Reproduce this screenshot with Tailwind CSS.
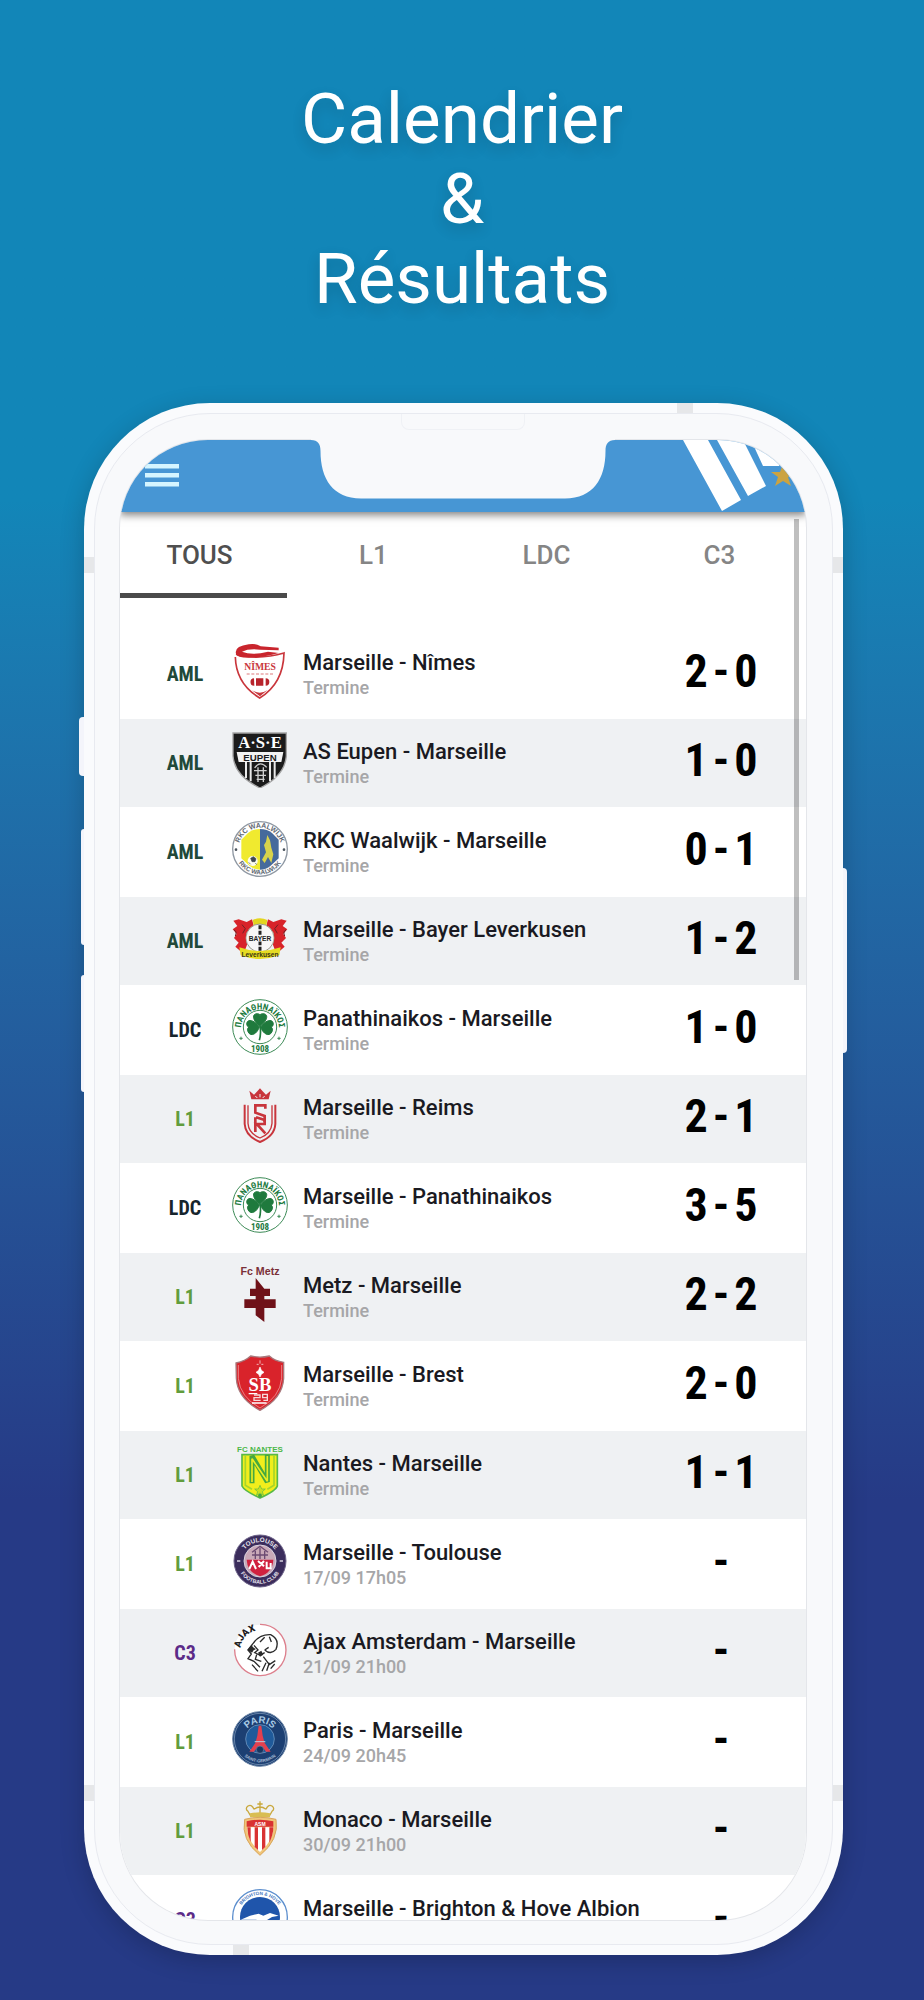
<!DOCTYPE html>
<html lang="fr">
<head>
  <meta charset="UTF-8">
  <meta name="viewport" content="width=device-width, initial-scale=1.0">
  <title>Calendrier &amp; Résultats</title>

  <script src="https://cdn.jsdelivr.net/npm/@tailwindcss/browser@4"></script>
</head>
<body class="h-screen flex flex-col overflow-hidden font-['Roboto',sans-serif] bg-linear-to-b from-[#1286b8] from-25% to-[#263a86] to-75%">

  <h1 class="pt-[79px] pb-[84px] text-center text-[71px] leading-[80px] font-normal text-white [text-shadow:0_6px_14px_rgba(0,0,0,0.16)]">
    Calendrier<br>&amp;<br>Résultats
  </h1>

  <!-- phone -->
  <main class="relative flex-1 min-h-0 ml-[84px] mr-[81px] mb-[45px] rounded-[126px] bg-[#fafbfd] p-[10px] shadow-[0_6px_24px_rgba(0,0,0,0.2)]">

    <!-- side buttons -->
    <div class="absolute -left-[5px] top-[314px] w-[5px] h-[59px] rounded-l-sm bg-[#f4f5fb]"></div>
    <div class="absolute -left-[3px] top-[426px] w-[3px] h-[116px] rounded-l-sm bg-[#f4f5fb]"></div>
    <div class="absolute -left-[3px] top-[572px] w-[3px] h-[117px] rounded-l-sm bg-[#f4f5fb]"></div>
    <div class="absolute -right-[4px] top-[465px] w-[4px] h-[185px] rounded-r-sm bg-[#f4f5fb]"></div>

    <!-- antenna bands -->
    <div class="absolute left-0 top-[154px] w-[10px] h-4 bg-[#e6e7e9]"></div>
    <div class="absolute right-0 top-[154px] w-[10px] h-4 bg-[#e6e7e9]"></div>
    <div class="absolute left-0 bottom-[154px] w-[10px] h-4 bg-[#e6e7e9]"></div>
    <div class="absolute right-0 bottom-[154px] w-[10px] h-4 bg-[#e6e7e9]"></div>
    <div class="absolute right-[150px] top-0 w-4 h-[10px] bg-[#e6e7e9]"></div>
    <div class="absolute left-[149px] bottom-0 w-4 h-[10px] bg-[#e6e7e9]"></div>

    <div class="relative h-full rounded-[116px] border border-[#e8eaf0] bg-[#f8f9fb] pl-[25px] pr-[26px] pt-[26px] pb-[24px]">

      <!-- speaker -->
      <div class="absolute top-0 left-0 right-[2px] mx-auto w-[124px] h-4 rounded-b-lg border border-t-0 border-[#eff1f5]"></div>

      <!-- notch -->
      <svg class="absolute z-10 top-[25px] left-0 right-[2px] mx-auto" width="304" height="60" viewBox="0 0 304 60">
        <path d="M0 0V1C7 1 9.500 5 9.500 12C9.500 40 22 59.500 50 59.500H254C282 59.500 294.500 40 294.500 12C294.500 5 297 1 304 1V0Z" fill="#f8f9fb"/>
      </svg>

      <div class="relative h-full rounded-[88px] overflow-hidden bg-white flex flex-col shadow-[0_0_0_1px_#e4e6ea]">

        <header class="relative z-[1] h-[72px] shrink-0 bg-[#4796d4] shadow-[0_3px_8px_rgba(0,0,0,0.5)] flex justify-between">
          <button type="button" aria-label="Menu" class="ml-6 mt-[23px] w-[36px] h-[26px]">
            <svg width="36" height="26" viewBox="0 0 36 26" fill="#d5f5ff">
              <path d="M1 1h34v4.500H1zM1 10h34v4.500H1zM1 19h34v4.500H1z"/>
            </svg>
          </button>
          <svg width="126" height="72" viewBox="680 440 126 72">
            <path d="M683 440H708L741 500L722 511Z M717 440H743L766 486L748 496Z M751 440H790L779 466H763Z" fill="#fff"/>
            <path d="M783 464L786 472H795L788 477L791 486L783 481L775 486L778 477L771 472H780Z" fill="#cba341"/>
          </svg>
        </header>

        <nav class="h-[86px] shrink-0 grid grid-cols-[167px_1fr_1fr_1fr] text-[26px] text-[#858585]">
          <button type="button" class="pt-[5px] pr-2 border-b-[5px] border-[#4a4a4a] font-medium text-[#4f4f4f]">TOUS</button>
          <button type="button" class="font-medium">L1</button>
          <button type="button" class="font-medium">LDC</button>
          <button type="button" class="font-medium">C3</button>
        </nav>

        <table class="mt-[31px] w-full table-fixed border-collapse">
          <colgroup>
            <col class="w-[112px]">
            <col class="w-[56px]">
            <col>
            <col class="w-[170px]">
          </colgroup>
          <tbody id="matches"></tbody>
        </table>

        <!-- scrollbar -->
        <div class="absolute right-[7px] top-[79px] w-[5px] h-[461px] bg-black/25"></div>
      </div>
    </div>
  </main>

  <script>
    // crests, all on a 168 x 168 canvas
    const crests = {
      nimes: `
        <path d="M10 42Q12 122 83 165Q154 122 156 30Q110 44 60 42Q30 40 12 34" fill="#fff" stroke="#c9363c" stroke-width="5"/>
        <path d="M12 32Q6 10 50 4Q70 0 86 10L140 14V22L84 20Q50 16 30 26Q60 38 108 26L140 30Q90 44 50 44Q14 44 12 32Z" fill="#c9252d"/>
        <text x="84" y="82" font-size="29" font-weight="700" fill="#c9363c" text-anchor="middle" font-family="Liberation Serif">NÎMES</text>
        <path d="M44 93H124" stroke="#e9a6a8" stroke-width="4" stroke-dasharray="9 5"/>
        <path d="M66 106a11 11 0 1 0 1 22ZM72 106h22v22h-22ZM101 106a11 11 0 1 1 0 22Z" fill="#b8242c"/>
        <path d="M60 142Q84 156 106 142L84 160Z" fill="#c9363c"/>`,
      eupen: `
        <path d="M3 3H163V72Q158 132 84 168Q8 132 3 72Z" fill="#1b1b1b" stroke="#a5a5a5" stroke-width="4"/>
        <text x="84" y="48" font-size="50" font-weight="700" fill="#fff" text-anchor="middle" font-family="Liberation Serif">A·S·E</text>
        <path d="M14 60H154L148 90H20Z" fill="#f2f2f2"/>
        <text x="84" y="86" font-size="29" font-weight="700" fill="#1b1b1b" text-anchor="middle" font-family="Liberation Sans">EUPEN</text>
        <path d="M42 90V138M56 90V148M114 90V148M128 90V138" stroke="#e9e9e9" stroke-width="6"/>
        <path d="M68 108Q84 84 104 106M66 116H104M70 130H102M74 142H98M78 106V150M94 106V150" stroke="#cfcfcf" stroke-width="4" fill="none"/>`,
      rkc: `
        <circle cx="84" cy="84" r="82" fill="#fff" stroke="#8f98a3" stroke-width="4"/>
        <path id="rkcTop" d="M20 84a64 64 0 0 1 128 0" fill="none"/>
        <path id="rkcBot" d="M8 84a76 76 0 0 0 152 0" fill="none"/>
        <text font-size="21" font-weight="700" fill="#5d6670" font-family="Liberation Sans"><textPath href="#rkcTop" startOffset="50%" text-anchor="middle">RKC WAALWIJK</textPath></text>
        <text font-size="19" font-weight="700" fill="#5d6670" font-family="Liberation Sans"><textPath href="#rkcBot" startOffset="50%" text-anchor="middle">RKC WAALWIJK</textPath></text>
        <path d="M84 24Q62 24 48 36L28 56V112L52 134Q66 146 84 146Z" fill="#f0ea2f"/>
        <path d="M84 24Q106 24 120 36L140 56V112L116 134Q102 146 84 146Z" fill="#456a9c"/>
        <path d="M106 42L114 58L118 80L124 100L118 126L108 108L98 126L90 116L102 94L96 72L102 62Z" fill="#d9d34b"/>
        <circle cx="62" cy="120" r="15" fill="#fbfbf0"/>
        <path d="M56 112l8-5 8 6-3 9h-9ZM50 124l6 6M70 126l4 5" fill="#3f4750" stroke="#3f4750" stroke-width="2"/>
        <circle cx="12" cy="86" r="4" fill="#4c555f"/><circle cx="156" cy="86" r="4" fill="#4c555f"/>`,
      leverkusen: `
        <path d="M4 32L20 28L44 36L60 28L66 50L40 118L24 122L10 110L20 98L6 84L14 72L2 58L16 48Z" fill="#d8232a"/>
        <path d="M164 32L148 28L124 36L108 28L102 50L128 118L144 122L158 110L148 98L162 84L154 72L166 58L152 48Z" fill="#d8232a"/>
        <path d="M6 60Q16 64 10 78M162 60Q152 64 158 78M30 44L40 56L32 70M138 44L128 56L136 70" stroke="#6e2226" stroke-width="3" fill="none"/>
        <path d="M62 30Q84 20 106 30L102 50H66Z" fill="#e3d51f"/>
        <circle cx="84" cy="84" r="42" fill="#f7f7f7" stroke="#9a9a8c" stroke-width="3"/>
        <path d="M84 46V122" stroke="#222" stroke-width="9" stroke-dasharray="12 4"/>
        <rect x="44" y="76" width="80" height="18" fill="#f7f7f7"/>
        <text x="84" y="92" font-size="20" font-weight="700" fill="#222" text-anchor="middle" font-family="Liberation Sans">BAYER</text>
        <path d="M22 112Q84 134 146 112L142 136Q84 158 26 136Z" fill="#e6dc22"/>
        <text x="84" y="141" font-size="20" font-weight="700" fill="#3a3512" text-anchor="middle" font-family="Liberation Sans">Leverkusen</text>`,
      pana: `
        <circle cx="84" cy="84" r="82" fill="#fff" stroke="#3d8b57" stroke-width="3"/>
        <circle cx="84" cy="84" r="50" fill="none" stroke="#3d8b57" stroke-width="3"/>
        <path id="panaRing" d="M27 88a57 57 0 1 1 114 0" fill="none"/>
        <text font-size="26" font-weight="700" fill="#217a40" font-family="Roboto Condensed"><textPath href="#panaRing" startOffset="50%" text-anchor="middle">ΠΑΝΑΘΗΝΑΪΚΟΣ</textPath></text>
        <path d="M84 82C62 66 58 44 76 44Q84 44 84 50Q84 44 92 44C112 44 106 66 84 82ZM82 84C64 60 46 60 44 74Q44 82 50 84Q44 90 48 98C56 116 76 104 82 84ZM86 84C104 60 122 60 124 74Q124 82 118 84Q124 90 120 98C112 116 92 104 86 84Z" fill="#1f7a3d" stroke="#1f7a3d" stroke-width="3"/>
        <path d="M84 80Q88 104 82 124" stroke="#1f7a3d" stroke-width="5" fill="none"/>
        <path d="M22 118h10M27 113v10M136 118h10M141 113v10" stroke="#3d8b57" stroke-width="3"/>
        <text x="84" y="159" font-size="27" font-weight="700" fill="#217a40" text-anchor="middle" font-family="Roboto Condensed">1908</text>`,
      reims: `
        <path d="M52 8L66 20L76 10L84 1L92 10L102 20L116 8L110 34H58Z" fill="#c8353c"/>
        <path d="M70 24l6 6M84 18v10M98 24l-6 6" stroke="#f0f1f3" stroke-width="3"/>
        <path d="M38 50V108Q40 144 84 162Q128 144 130 108V50" fill="none" stroke="#c8353c" stroke-width="6"/>
        <path d="M48 52V106Q50 136 84 150Q118 136 120 106V52" fill="none" stroke="#c8353c" stroke-width="4"/>
        <path d="M100 62V52H70V74L98 84V102" fill="none" stroke="#c8353c" stroke-width="8"/>
        <path d="M70 132V88M72 88L98 96V108L74 108L100 136" fill="none" stroke="#c8353c" stroke-width="8"/>`,
      metz: `
        <text x="84" y="26" font-size="32" font-weight="700" fill="#7a3038" text-anchor="middle" font-family="Liberation Sans">Fc Metz</text>
        <path d="M71 36L97 68H114V90H97V100H131V126H97V168L71 148V126H37V100H71V90H54V68H71Z" fill="#6f1219"/>`,
      brest: `
        <path d="M12 24Q40 18 56 3Q84 10 112 3Q128 18 155 22V70Q152 130 84 166Q16 130 13 70Z" fill="#d9232b" stroke="#a8787c" stroke-width="4"/>
        <path d="M19 30V70Q24 126 84 159Q144 126 149 70V30" fill="none" stroke="#f0b0b2" stroke-width="2"/>
        <path d="M84 36l4 10 8 6-8 6-4 8-4-8-8-6 8-6ZM84 16v10M74 28h6M88 28h6" fill="#fff" stroke="#fff" stroke-width="2"/>
        <text x="84" y="108" font-size="56" font-weight="700" fill="#fff" text-anchor="middle" font-family="Liberation Serif">SB</text>
        <path d="M50 116H76M60 144H104" stroke="#fff" stroke-width="4"/>
        <path d="M66 120h18v8h-18v8h20M106 128h-14v-10h14v18h-12" fill="none" stroke="#f6dada" stroke-width="4"/>`,
      nantes: `
        <text x="84" y="23" font-size="24" font-weight="700" fill="#4cb748" text-anchor="middle" font-family="Liberation Sans">FC NANTES</text>
        <path d="M30 32H136V126Q132 140 84 162Q36 140 30 126Z" fill="#f1ee1c" stroke="#58b947" stroke-width="5"/>
        <path d="M40 36V124L60 136M126 36V124L106 136" fill="none" stroke="#a6d52c" stroke-width="5"/>
        <path d="M60 118V36L106 114V32" fill="none" stroke="#45a83f" stroke-width="15" stroke-linejoin="bevel"/>
        <path d="M60 114V44L106 112V36" fill="none" stroke="#e9ee22" stroke-width="5" stroke-linejoin="bevel"/>
        <path d="M84 124l5 11h11l-9 8 4 12-11-8-11 8 4-12-9-8h11Z" fill="#c9e11f" stroke="#58b947" stroke-width="2"/>
        <circle cx="84" cy="155" r="6" fill="#45a83f"/>`,
      toulouse: `
        <circle cx="84" cy="84" r="78" fill="#3b2d5c" stroke="#6d6389" stroke-width="3"/>
        <circle cx="84" cy="84" r="48" fill="#c9a9b8" stroke="#d8d2df" stroke-width="3"/>
        <path id="tfcTop" d="M27 84a57 57 0 0 1 114 0" fill="none"/>
        <path id="tfcBot" d="M16 84a68 68 0 0 0 136 0" fill="none"/>
        <text font-size="19" font-weight="700" fill="#e8e5ef" font-family="Liberation Sans"><textPath href="#tfcTop" startOffset="50%" text-anchor="middle">TOULOUSE</textPath></text>
        <text font-size="16" font-weight="700" fill="#e8e5ef" font-family="Liberation Sans"><textPath href="#tfcBot" startOffset="50%" text-anchor="middle">FOOTBALL CLUB</textPath></text>
        <path d="M44 80H124Q122 118 84 130Q46 118 44 80Z" fill="#d0213f"/>
        <path d="M60 58L84 40L108 58M60 66H108M84 44V78M70 54V78M98 54V78" stroke="#6b4a72" stroke-width="4" fill="none"/>
        <path d="M52 108L62 86L72 108M78 84L96 100M96 84L80 102M104 86V106H116V90" stroke="#fff" stroke-width="6" fill="none"/>
        <path d="M15 84h10M143 84h10" stroke="#d8d2df" stroke-width="5"/>`,
      ajax: `
        <circle cx="84" cy="84" r="76" fill="#fff"/>
        <path d="M84 7A77 77 0 1 1 8 82" fill="none" stroke="#dd7f8c" stroke-width="4"/>
        <path id="ajaxRing" d="M25 84A59 59 0 0 1 96 26" fill="none"/>
        <text font-size="29" font-weight="900" fill="#1d1d1d" font-family="Roboto"><textPath href="#ajaxRing" startOffset="6">AJAX</textPath></text>
        <path d="M62 66Q82 36 116 38Q144 52 132 82Q116 100 98 84M98 84L110 76M62 66L48 84L58 96L48 110L66 118L84 136M66 70L78 84L68 92L84 100L98 92M58 78L70 82M74 98L70 112L88 118M94 104L112 128L130 116M104 146L112 122M90 148L102 122M116 140L128 126M60 128L78 148M112 44L118 60M98 46L84 60" fill="none" stroke="#2a2a2a" stroke-width="4"/>
        <path d="M46 84l12-14 10 10-8 12ZM78 92l10-6 6 12-10 6Z" fill="#2a2a2a"/>`,
      psg: `
        <circle cx="84" cy="84" r="82" fill="#1c3f72" stroke="#6d87a8" stroke-width="3"/>
        <circle cx="84" cy="84" r="77" fill="none" stroke="#8da6c4" stroke-width="2"/>
        <circle cx="84" cy="84" r="43" fill="#1f5a9a" stroke="#7fa3c8" stroke-width="2"/>
        <path id="psgTop" d="M34 74a52 52 0 0 1 100 0" fill="none"/>
        <path id="psgBot" d="M14 84a70 70 0 0 0 140 0" fill="none"/>
        <text font-size="29" font-weight="700" fill="#a9cbe6" font-family="Liberation Sans"><textPath href="#psgTop" startOffset="50%" text-anchor="middle">PARIS</textPath></text>
        <text font-size="13" font-weight="700" fill="#a9bdd6" font-family="Liberation Sans"><textPath href="#psgBot" startOffset="50%" text-anchor="middle">SAINT-GERMAIN</textPath></text>
        <path d="M80 44H88L92 74L98 96L116 122H102Q84 92 66 122H52L70 96L76 74Z" fill="#e2404f"/>
        <path d="M68 92H100" stroke="#b8c9dc" stroke-width="3"/>
        <circle cx="84" cy="116" r="11" fill="#183661" stroke="#6d87a8" stroke-width="2"/>`,
      monaco: `
        <path d="M56 48L48 34Q38 26 48 18Q60 12 66 28M112 48L120 34Q130 26 120 18Q108 12 102 28M84 4V42M66 28Q84 14 102 28M76 12H92" fill="none" stroke="#c9a83d" stroke-width="4"/>
        <path d="M54 40Q84 34 114 40V52H54Z" fill="#d9bd52"/>
        <path d="M38 58Q84 46 132 58Q142 120 84 166Q26 120 38 58Z" fill="#f0c67a" stroke="#d9a55c" stroke-width="3"/>
        <path d="M44 64Q84 54 124 64V80H44Z" fill="#d93232"/>
        <path d="M46 82H124Q124 124 84 156Q46 124 46 82Z" fill="#fff"/>
        <path d="M46 82H56V126Q46 104 46 82ZM68 82H78V150L68 141ZM90 82H100V141L90 150ZM112 82H124Q124 104 112 128Z" fill="#d93232"/>
        <text x="84" y="77" font-size="15" font-weight="700" fill="#fff" text-anchor="middle" font-family="Liberation Sans">ASM</text>`,
      brighton: `
        <circle cx="84" cy="84" r="82" fill="#fff" stroke="#5d8fce" stroke-width="4"/>
        <circle cx="84" cy="84" r="60" fill="#1f55ab"/>
        <path id="bhaTop" d="M18 84a66 66 0 0 1 132 0" fill="none"/>
        <text font-size="14" font-weight="700" fill="#3f74bd" font-family="Liberation Sans"><textPath href="#bhaTop" startOffset="50%" text-anchor="middle">BRIGHTON &amp; HOVE</textPath></text>
        <path d="M26 92L54 80L80 74L94 80L114 72L140 80L120 84L100 96L84 110H60L74 92Z" fill="#fff"/>`
    }

    const matches = [
      ['AML', 'nimes', 'Marseille - Nîmes', 'Termine', '2-0'],
      ['AML', 'eupen', 'AS Eupen - Marseille', 'Termine', '1-0'],
      ['AML', 'rkc', 'RKC Waalwijk - Marseille', 'Termine', '0-1'],
      ['AML', 'leverkusen', 'Marseille - Bayer Leverkusen', 'Termine', '1-2'],
      ['LDC', 'pana', 'Panathinaikos - Marseille', 'Termine', '1-0'],
      ['L1', 'reims', 'Marseille - Reims', 'Termine', '2-1'],
      ['LDC', 'pana', 'Marseille - Panathinaikos', 'Termine', '3-5'],
      ['L1', 'metz', 'Metz - Marseille', 'Termine', '2-2'],
      ['L1', 'brest', 'Marseille - Brest', 'Termine', '2-0'],
      ['L1', 'nantes', 'Nantes - Marseille', 'Termine', '1-1'],
      ['L1', 'toulouse', 'Marseille - Toulouse', '17/09 17h05', '-'],
      ['C3', 'ajax', 'Ajax Amsterdam - Marseille', '21/09 21h00', '-'],
      ['L1', 'psg', 'Paris - Marseille', '24/09 20h45', '-'],
      ['L1', 'monaco', 'Monaco - Marseille', '30/09 21h00', '-'],
      ['C3', 'brighton', 'Marseille - Brighton &amp; Hove Albion', '', '-']
    ]

    const cupColors = {
      AML: 'text-[#21493a]',
      LDC: 'text-[#16242c]',
      L1: 'text-[#619c3d]',
      C3: 'text-[#5c2b88]'
    }

    document.querySelector('#matches').innerHTML = matches.map(([cup, crest, teams, info, score]) => `
      <tr class="h-[90px] even:h-[88px] even:bg-[#eff1f3]">
        <td class="p-0 pl-[18px] text-center font-['Roboto_Condensed','Roboto',sans-serif] font-bold text-[20px] leading-6 ${cupColors[cup]}">${cup}</td>
        <td class="p-0 pb-[6px]"><svg class="block size-14" viewBox="0 0 168 168">${crests[crest]}</svg></td>
        <td class="p-0 pt-[2px] pl-[15px] whitespace-nowrap">
          <p class="text-[22px] leading-[26px] font-medium text-[#1a1a22]">${teams}</p>
          <p class="h-6 text-[18px] leading-6 font-medium text-[#a6a6a8]">${info}</p>
        </td>
        <td class="p-0 pb-[6px] font-['Roboto_Condensed','Roboto',sans-serif] font-bold text-[46px] leading-[50px] text-black">
          <div class="flex justify-center gap-[5px]">${score.split('').map(c => `<span>${c}</span>`).join('')}</div>
        </td>
      </tr>`).join('')
  </script>
</body>
</html>
